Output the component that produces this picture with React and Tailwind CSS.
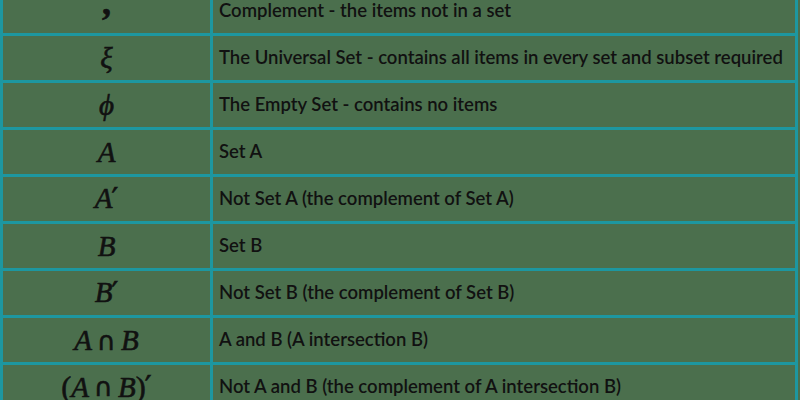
import React from 'react';

const Prime = () => (
  <span className="not-italic font-['DejaVu_Serif',serif] text-[30px] leading-none self-start -ml-[1px]">′</span>
);

const Cap = () => (
  <span className="not-italic font-['DejaVu_Sans',sans-serif] text-[26px] mx-[5px]">∩</span>
);

const rows = [
  { sym: <span className="not-italic font-bold text-[36px] mb-[18px]">,</span>, text: 'Complement - the items not in a set' },
  { sym: <span>ξ</span>, text: 'The Universal Set - contains all items in every set and subset required' },
  { sym: <span>ϕ</span>, text: 'The Empty Set - contains no items' },
  { sym: <span>A</span>, text: 'Set A' },
  { sym: <span className="flex">A<Prime /></span>, text: 'Not Set A (the complement of Set A)' },
  { sym: <span>B</span>, text: 'Set B' },
  { sym: <span className="flex">B<Prime /></span>, text: 'Not Set B (the complement of Set B)' },
  {
    sym: (
      <span>
        A<Cap />B
      </span>
    ),
    text: 'A and B (A intersection B)',
  },
  {
    sym: (
      <span className="flex items-center">
        <span className="not-italic font-['Liberation_Serif',serif] text-[30px]">(</span>A<Cap />B
        <span className="not-italic font-['Liberation_Serif',serif] text-[30px]">)</span>
        <Prime />
      </span>
    ),
    text: 'Not A and B (the complement of A intersection B)',
  },
];

export default function App() {
  return (
    <div className="w-[800px] h-[400px] overflow-hidden bg-[#4b6f4d]">
      <div className="-mt-[14px] w-[798px] grid grid-cols-[207px_1fr] gap-[3px] p-[3px] pb-0 bg-[#1d97a0]">
        {rows.map((row, i) => (
          <div key={i} className="contents">
            <div className="h-[44px] bg-[#4b6f4d] flex items-center justify-center font-['Liberation_Serif',serif] italic text-[29px] text-[#111] leading-none [-webkit-text-stroke:0.6px_#111]">
              {row.sym}
            </div>
            <div className="h-[44px] bg-[#4b6f4d] flex items-center pl-[6px] font-['Lato',sans-serif] font-semibold text-[18.5px] text-[#111]">
              {row.text}
            </div>
          </div>
        ))}
      </div>
    </div>
  );
}
